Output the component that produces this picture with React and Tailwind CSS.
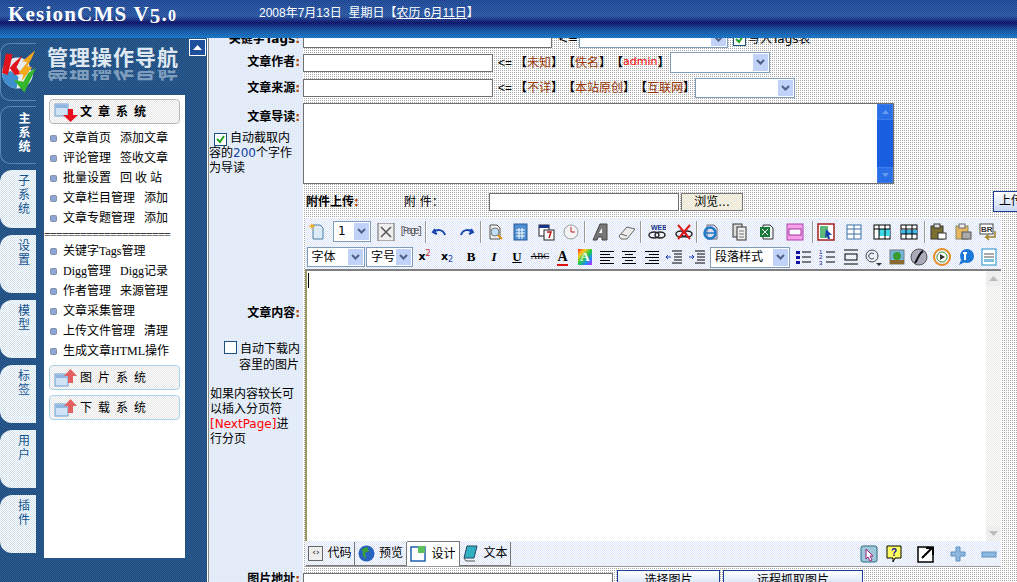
import { Fragment } from 'react';

const cjk = "font-['DejaVu_Sans','Noto_Sans_CJK_SC',sans-serif]";

// Sidebar tabs
const tabs = [
  { label: ['子', '系', '统'] },
  { label: ['设', '置'] },
  { label: ['模', '型'] },
  { label: ['标', '签'] },
  { label: ['用', '户'] },
  { label: ['插', '件'] },
];

const menuTop = [
  ['文章首页', '添加文章'],
  ['评论管理', '签收文章'],
  ['批量设置', '回 收 站'],
  ['文章栏目管理', '添加'],
  ['文章专题管理', '添加'],
];

const menuBottom = [
  ['关键字Tags管理'],
  ['Digg管理', 'Digg记录'],
  ['作者管理', '来源管理'],
  ['文章采集管理'],
  ['上传文件管理', '清理'],
  ['生成文章HTML操作'],
];

function Arrow({ down }) {
  return (
    <svg width="30" height="20" viewBox="0 0 30 20" className="shrink-0">
      <rect x="2" y={down ? 2 : 6} width="13" height="12" fill="#cfe2f6" stroke="#6f9fd0" />
      <rect x="3" y={down ? 3 : 7} width="11" height="3" fill="#8fb6e0" />
      {down ? (
        <path d="M15 7h5v6h5l-7.500 7-7.500-7h5z" fill="#e8101c" />
      ) : (
        <path d="M15 15h5v-7h4l-6.500-7-6.500 7h4z" fill="#e2605f" />
      )}
    </svg>
  );
}

function MenuHead({ label, open }) {
  return (
    <div
      className={`mx-[5px] flex h-[25px] w-[131px] items-center rounded-[4px] border pl-[3px] bg-[repeating-conic-gradient(#e4e4e4_0_25%,#fff_0_50%)] bg-[size:2px_2px] ${
        open ? 'border-[#b8b8b8] font-bold' : 'border-[#a9d2ec]'
      }`}
    >
      <Arrow down={open} />
      <span className="ml-[-3px] text-[12px] leading-none tracking-[1.500px] whitespace-pre text-black">{label}</span>
    </div>
  );
}

function MenuRow({ item }) {
  return (
    <div className="flex h-[20px] items-center gap-[9px] pl-[7px] text-[12px] whitespace-nowrap text-black">
      <span className="mr-[-2px] size-[5px] shrink-0 rounded-[1px] bg-[#8ea6d8] shadow-[0_0_0_1px_#7f8fa8]" />
      <span className="min-w-[48px]">{item[0]}</span>
      {item[1] && <span>{item[1]}</span>}
    </div>
  );
}

function Sidebar() {
  return (
    <aside className="flex w-[207px] shrink-0 bg-[repeating-conic-gradient(#1c4a80_0_25%,#2f5f8e_0_50%)] bg-[size:2px_2px] font-['Liberation_Serif','Noto_Sans_CJK_SC',serif]">
      <div className="flex w-[36px] shrink-0 flex-col">
        <div className="mt-[5px] flex h-[58px] items-center rounded-l-[10px] border-y border-l border-[#5b86b4]">
          <svg width="36" height="44" viewBox="0 0 36 44">
            <circle cx="17" cy="23" r="16" fill="#e4ecef" />
            <path d="M1 24a16 16 0 0 0 15 15l2-12-8-6z" fill="#3f8fd0" />
            <path d="M20 6a17 17 0 0 1 13 13l-2 2-4-13z" fill="#245a8c" />
            <path d="M13 30l11 13 12-25-8 5-5 9z" fill="#35b52c" />
            <path d="M5 3l7 1-5 21-6-2z" fill="#e0141c" />
            <path d="M13 13l9-8-6 12 5 7-7 1-5-7z" fill="#e0141c" />
            <path d="M35 0L22 11l5 1-9 11 5 2-2 7 11-15-5-1 5-9z" fill="#f4a81c" />
          </svg>
        </div>
        <div className="mt-[5px] flex h-[58px] flex-col items-center rounded-l-[10px] border-y border-l border-[#5b86b4] pt-[5px] pl-[12px] text-[12px] leading-[14px] font-bold text-white">
          <span>主</span>
          <span>系</span>
          <span>统</span>
        </div>
        <div className="mt-[6px] flex flex-col gap-[7px]">
          {tabs.map((t) => (
            <div
              key={t.label[0]}
              className="flex h-[58px] flex-col items-center rounded-l-[12px] bg-[repeating-conic-gradient(#cfe0ee_0_25%,#fff_0_50%)] bg-[size:2px_2px] pt-[4px] pl-[12px] text-[12px] leading-[14px] text-[#14558f]"
            >
              {t.label.map((c) => (
                <span key={c}>{c}</span>
              ))}
            </div>
          ))}
        </div>
      </div>
      <div className="ml-[8px] flex w-[141px] shrink-0 flex-col">
        <div className="h-[57px]">
          <div className="pt-[8px] pl-[3px] text-[21px] leading-[24px] font-bold tracking-[1px] whitespace-nowrap text-[#dfe8f0]">
            管理操作导航
          </div>
          <div className="h-[11px] overflow-hidden pl-[3px] text-[21px] leading-[22px] font-bold tracking-[1px] whitespace-nowrap text-[#7f9dbd] -scale-y-100">
            管理操作导航
          </div>
        </div>
        <div className="flex h-[463px] flex-col bg-white pt-[4px]">
          <MenuHead label="文 章 系 统" open />
          <div className="mt-[4px]">
            {menuTop.map((m) => (
              <MenuRow key={m[0]} item={m} />
            ))}
          </div>
          <div className="h-[14px] overflow-hidden text-[12px] leading-[14px] tracking-[-0.770px] text-black">
            =====================
          </div>
          <div className="mt-[-1px]">
            {menuBottom.map((m) => (
              <MenuRow key={m[0]} item={m} />
            ))}
          </div>
          <div className="mt-[4px] flex flex-col gap-[5px]">
            <MenuHead label="图 片 系 统" />
            <MenuHead label="下 载 系 统" />
          </div>
        </div>
      </div>
      <div className="mt-[1px] ml-[4px] flex size-[17px] items-center justify-center border border-white bg-[#1d4f9c]">
        <svg width="9" height="5" viewBox="0 0 9 5">
          <path d="M0 5l4.500-5 4.500 5z" fill="#fff" />
        </svg>
      </div>
    </aside>
  );
}

// Native-looking select with the pale blue chevron
function Select({ w, h, label, className = '' }) {
  return (
    <div className={`flex shrink-0 items-stretch border border-[#7f9db9] bg-white ${w} ${h} ${className}`}>
      <span className="flex-1 pl-[4px] text-[12px] leading-[19px] whitespace-nowrap text-black">{label}</span>
      <span className="my-px mr-px flex w-[15px] items-center justify-center bg-[#c1d2f8]">
        <svg width="9" height="7" viewBox="0 0 9 7">
          <path d="M1 1l3.500 3.500L8 1" fill="none" stroke="#4d6185" strokeWidth="2" />
        </svg>
      </span>
    </div>
  );
}

function Input({ className = '' }) {
  return <div className={`shrink-0 border border-[#707070] bg-white ${className}`} />;
}

function Label({ children, className = '' }) {
  return (
    <div className={`w-[92px] shrink-0 pr-[1px] text-right text-[12px] font-bold text-black ${className}`}>
      {children}
      <span className="text-[#b04000]">:</span>
    </div>
  );
}

function Quick({ items }) {
  return (
    <span className="flex items-center text-[12px] whitespace-nowrap text-black">
      <span className="w-[17px] font-['Liberation_Sans']">&lt;=</span>
      {items.map((t) => (
        <Fragment key={t}>
          <span className="w-[12px] font-bold">【</span>
          <span className={t === 'admin' ? 'text-[11px] text-[#ff0000]' : 'text-[#993300]'}>{t}</span>
          <span className="w-[12px] font-bold">】</span>
        </Fragment>
      ))}
    </span>
  );
}

const Svg = ({ children, w = 18 }) => (
  <svg width={w} height="18" viewBox={`0 0 ${w} 18`}>
    {children}
  </svg>
);

const Doc = ({ fill = '#fff', stroke = '#555' }) => <path d="M5 2h7l3 3v11H5z" fill={fill} stroke={stroke} />;

// Toolbar row 1, [width of slot, drawing]; no drawing means a separator
const toolbarOne = [
  [22, <Svg key="new"><Doc fill="#dcebf6" stroke="#4a7fa8" /><path d="M4 0l1 2 3 1-3 1-1 3-1-3-3-1 3-1z" fill="#f4b020" /></Svg>],
  [48, <Select key="sel" w="w-[38px]" h="h-[21px]" label="1" />],
  [20, <Svg key="x"><rect x="1" y="0" width="16" height="18" fill="#eee" stroke="#666" /><path d="M4 4l10 10M14 4L4 14" stroke="#555" strokeWidth="1.500" /></Svg>],
  [28, <span key="pg" className="font-['Liberation_Mono'] text-[10px] tracking-[-2.500px] text-[#555]">[Page]</span>],
  [4, null],
  [24, <Svg key="undo"><path d="M4 6l-2 3 4 2M3 9c3-3 9-3 11 3" fill="none" stroke="#1746b0" strokeWidth="2" /></Svg>],
  [28, <Svg key="redo"><path d="M14 6l2 3-4 2M15 9c-3-3-9-3-11 3" fill="none" stroke="#1746b0" strokeWidth="2" /></Svg>],
  [2, null],
  [24, <Svg key="find"><Doc fill="#eee" /><circle cx="10" cy="9" r="4" fill="#bfe0f8" stroke="#777" /><path d="M13 12l4 4" stroke="#e09010" strokeWidth="2" /></Svg>],
  [28, <Svg key="calc"><rect x="3" y="1" width="13" height="16" fill="#4d8ed0" stroke="#2a5a98" /><path d="M5 7h9M5 10h9M5 13h9M8 5v11M11 5v11" stroke="#fff" /></Svg>],
  [24, <Svg key="cal"><rect x="2" y="2" width="10" height="11" fill="#fff" stroke="#222" /><rect x="2" y="2" width="10" height="3" fill="#16348a" /><rect x="7" y="7" width="10" height="10" fill="#fff" stroke="#222" /><path d="M10 9h4l-2 6" fill="none" stroke="#c01818" strokeWidth="1.500" /></Svg>],
  [26, <Svg key="clock"><circle cx="9" cy="9" r="7" fill="#f4f4f4" stroke="#999" /><path d="M9 4v5h4" fill="none" stroke="#c02020" /></Svg>],
  [2, null],
  [28, <Svg key="a"><path d="M2 17L9 1h7v16h-5v-3H7l-1 3z" fill="#777" stroke="#444" /><path d="M8 10h3V5z" fill="#fff" /></Svg>],
  [26, <Svg key="erase"><path d="M1 13l8-9 8 2-8 10-6 0z" fill="#ececec" stroke="#666" /><path d="M3 11l6 2" stroke="#666" /></Svg>],
  [2, null],
  [30, <Svg key="web"><text x="3" y="7" fontSize="7" fontWeight="700" fill="#16348a" fontFamily="Liberation Sans">WEB</text><ellipse cx="6" cy="12" rx="5" ry="3" fill="none" stroke="#222" strokeWidth="1.500" /><ellipse cx="12" cy="12" rx="5" ry="3" fill="none" stroke="#222" strokeWidth="1.500" /></Svg>],
  [24, <Svg key="noweb"><ellipse cx="6" cy="11" rx="5" ry="3" fill="none" stroke="#222" strokeWidth="1.500" /><ellipse cx="12" cy="11" rx="5" ry="3" fill="none" stroke="#222" strokeWidth="1.500" /><path d="M3 2l12 14M15 2L3 16" stroke="#e01818" strokeWidth="2" /></Svg>],
  [2, null],
  [26, <Svg key="ie"><Doc fill="#dde" stroke="#667" /><circle cx="8" cy="10" r="5.500" fill="none" stroke="#1c7ac8" strokeWidth="2.500" /><path d="M3 10h10" stroke="#1c7ac8" strokeWidth="1.500" /></Svg>],
  [32, <Svg key="copy"><rect x="2" y="1" width="9" height="13" fill="#ddd" stroke="#333" /><rect x="6" y="4" width="9" height="13" fill="#eee" stroke="#333" /><path d="M8 8h5M8 11h5M8 14h5" stroke="#777" /></Svg>],
  [22, <Svg key="xls"><Doc fill="#f4f4f4" stroke="#333" /><rect x="2" y="4" width="10" height="10" fill="#1a7a3a" /><path d="M4 6l6 6M10 6l-6 6" stroke="#fff" /></Svg>],
  [34, <Svg key="pink"><rect x="1" y="1" width="16" height="16" fill="#f6a0e8" stroke="#b040b0" /><rect x="3" y="6" width="12" height="6" fill="#fff" stroke="#a030a0" /></Svg>],
  [2, null],
  [24, <Svg key="sel2"><rect x="1" y="1" width="16" height="16" fill="#fff" stroke="#a02020" strokeWidth="1.500" /><rect x="3" y="3" width="8" height="12" fill="#60b878" /><path d="M9 6l6 6-3 0 1 4-2 0-1-3-2 2z" fill="#1840b0" /></Svg>],
  [32, <Svg key="t1"><rect x="2" y="2" width="14" height="14" fill="#fff" stroke="#3a6ea5" /><path d="M2 6h14M2 11h14M9 2v14" stroke="#3a6ea5" /></Svg>],
  [24, <Svg key="t2"><rect x="1" y="2" width="16" height="14" fill="#fff" stroke="#000" /><rect x="6" y="6" width="11" height="7" fill="#40d8e8" /><path d="M1 6h16M6 2v14M12 2v14" stroke="#000" /></Svg>],
  [30, <Svg key="t3"><rect x="1" y="2" width="16" height="14" fill="#fff" stroke="#000" /><rect x="1" y="7" width="16" height="4" fill="#40b8e8" /><path d="M1 6h16M1 11h16M6 2v14M12 2v14" stroke="#000" /></Svg>],
  [2, null],
  [24, <Svg key="clip"><rect x="2" y="3" width="12" height="13" fill="#7c7030" stroke="#333" /><rect x="5" y="1" width="6" height="4" fill="#ddd" stroke="#333" /><rect x="9" y="10" width="8" height="6" fill="#fff" stroke="#333" /></Svg>],
  [26, <Svg key="paste"><rect x="2" y="3" width="12" height="13" fill="#e8b860" stroke="#886" /><rect x="5" y="1" width="6" height="4" fill="#eee" stroke="#666" /><rect x="8" y="9" width="9" height="7" fill="#aaa" stroke="#555" /></Svg>],
  [24, <Svg key="br"><rect x="1" y="1" width="13" height="10" fill="#fff" stroke="#444" /><text x="2" y="9" fontSize="8" fontWeight="700" fill="#333" fontFamily="Liberation Sans">BR</text><path d="M16 8v6H7l3-3M7 14l3 3" fill="none" stroke="#a08020" strokeWidth="1.500" /></Svg>],
];

const Lines = ({ rows }) => (
  <Svg>
    {rows.map(([x1, x2], i) => (
      <path key={i} d={`M${x1} ${3 + i * 3}.5H${x2}`} stroke="#000" />
    ))}
  </Svg>
);

const al = [[2, 16], [2, 12], [2, 16], [2, 12], [2, 16]];
const ac = [[2, 16], [5, 13], [2, 16], [5, 13], [2, 16]];
const ar = [[2, 16], [6, 16], [2, 16], [6, 16], [2, 16]];

// Toolbar row 2
const toolbarTwo = [
  [59, <Select key="font" w="w-[58px]" h="h-[20px]" label="字体" />],
  [49, <Select key="size" w="w-[47px]" h="h-[20px]" label="字号" />],
  [21, <span key="sup" className="text-[11px] font-bold text-black">x<sup className="text-[8px] font-normal text-[#c02020]">2</sup></span>],
  [24, <span key="sub" className="text-[11px] font-bold text-black">x<sub className="text-[8px] font-normal text-[#1840b0]">2</sub></span>],
  [24, <span key="b" className="font-['Liberation_Serif'] text-[13px] font-bold text-black">B</span>],
  [22, <span key="i" className="font-['Liberation_Serif'] text-[13px] font-bold text-black italic">I</span>],
  [24, <span key="u" className="font-['Liberation_Serif'] text-[13px] font-bold text-black underline">U</span>],
  [22, <span key="abc" className="font-['Liberation_Serif'] text-[9px] text-black line-through">ABC</span>],
  [23, <span key="ca" className="border-b-2 border-[#e01010] font-['Liberation_Serif'] text-[14px] leading-[15px] font-bold text-black">A</span>],
  [22, <span key="ra" className="bg-[linear-gradient(135deg,#f22,#fc2,#2c4,#28f,#c2f)] px-[2px] font-['Liberation_Serif'] text-[13px] leading-[16px] font-bold text-white">A</span>],
  [21, <Lines key="l" rows={al} />],
  [24, <Lines key="c" rows={ac} />],
  [21, <Lines key="r" rows={ar} />],
  [23, <Svg key="out"><path d="M7 3h10M9 6h8M9 9h8M9 12h8M7 15h10" stroke="#000" /><path d="M6 9H1M3 7L1 9l2 2" fill="none" stroke="#1840b0" /></Svg>],
  [24, <Svg key="ind"><path d="M7 3h10M9 6h8M9 9h8M9 12h8M7 15h10" stroke="#000" /><path d="M1 9h5M4 7l2 2-2 2" fill="none" stroke="#1840b0" /></Svg>],
  [82, <Select key="para" w="w-[80px]" h="h-[21px]" label="段落样式" />],
  [23, <Svg key="ul"><path d="M2 3h4v3H2zM2 8h4v3H2zM2 13h4v3H2z" fill="#1010a0" /><path d="M8 4h9M8 9h9M8 14h9" stroke="#000" /></Svg>],
  [25, <Svg key="ol"><text x="1" y="6" fontSize="6" fill="#1010a0" fontFamily="Liberation Sans">1</text><text x="1" y="11" fontSize="6" fill="#1010a0" fontFamily="Liberation Sans">2</text><text x="1" y="17" fontSize="6" fill="#1010a0" fontFamily="Liberation Sans">3</text><path d="M8 4h9M8 9h9M8 14h9" stroke="#000" /></Svg>],
  [23, <Svg key="box"><path d="M2 2h14M2 16h14" stroke="#000" /><rect x="3" y="6" width="12" height="6" fill="none" stroke="#000" /></Svg>],
  [23, <Svg key="copyr"><circle cx="7" cy="8" r="6" fill="none" stroke="#444" /><path d="M9 6a3 3 0 1 0 0 4" fill="none" stroke="#444" /><path d="M11 15h6l-3 3z" fill="#333" /></Svg>],
  [23, <Svg key="img"><rect x="2" y="2" width="14" height="14" fill="#6fb8e0" stroke="#777" /><circle cx="9" cy="8" r="4" fill="#3a9a30" /><rect x="2" y="12" width="14" height="4" fill="#8a6a30" /></Svg>],
  [22, <Svg key="swf"><circle cx="9" cy="9" r="8" fill="#aab" stroke="#555" /><path d="M13 3C9 5 8 11 5 15" stroke="#111" strokeWidth="2" fill="none" /></Svg>],
  [24, <Svg key="media"><circle cx="9" cy="9" r="8" fill="none" stroke="#e88820" strokeWidth="2" /><circle cx="9" cy="9" r="5" fill="#fff" stroke="#3a9a30" /><path d="M7 6l5 3-5 3z" fill="#333" /></Svg>],
  [23, <Svg key="real"><circle cx="10" cy="8" r="7" fill="#1c78d8" /><path d="M6 5h4M8 5v7" stroke="#fff" strokeWidth="2" /><path d="M4 12l-2 5 6-3z" fill="#1c78d8" /></Svg>],
  [23, <Svg key="form"><rect x="2" y="1" width="14" height="16" fill="#fff" stroke="#2090c8" /><path d="M4 6h10M4 9h10" stroke="#555" /><rect x="4" y="11" width="10" height="3" fill="#80c0e0" /></Svg>],
];

function Toolbar({ items, className = '' }) {
  return (
    <div className={`flex items-center ${className}`}>
      {items.map(([w, el], i) =>
        el ? (
          <div key={i} className="flex shrink-0 items-center justify-center" style={{ width: w }}>
            {el}
          </div>
        ) : (
          <div key={i} className="flex h-[22px] shrink-0 justify-center" style={{ width: w }}>
            <span className="w-[2px] shrink-0 border-l border-[#999] bg-white" />
          </div>
        ),
      )}
    </div>
  );
}

function ModeTab({ label, active, w, children }) {
  return (
    <div
      className={`flex items-center justify-center gap-[4px] border-r border-[#777] text-[12px] text-black ${w} ${
        active ? 'mt-[-1px] h-[25px] border-t border-[#777] bg-white' : 'h-[24px] border-b'
      }`}
    >
      {children}
      {label}
    </div>
  );
}

export default function App() {
  return (
    <div className={`flex h-screen w-[1017px] flex-col overflow-hidden ${cjk}`}>
      <header className="flex h-[38px] shrink-0 items-start bg-[image:repeating-conic-gradient(#ffffff22_0_25%,transparent_0_50%),linear-gradient(180deg,#143f90_0%,#1f4f9c_42%,#000860_60%,#0a4698_78%,#0a70c4_100%)] bg-[size:2px_2px,100%_100%]">
        <div className="w-[259px] shrink-0 pl-[8px] font-['Liberation_Serif'] text-[21px] leading-[29px] font-bold tracking-[1.200px] whitespace-nowrap text-white">
          KesionCMS V<span className="relative top-[2px]">5</span>.<span className="text-[16px]">0</span>
        </div>
        <div className="pt-[5px] font-['Liberation_Sans','Noto_Sans_CJK_SC',sans-serif] text-[12px] leading-[16px] whitespace-pre text-white">
          2008年7月13日  星期日【<span className="underline">农历 6月11日</span>】
        </div>
      </header>
      <div className="flex min-h-0 flex-1">
        <Sidebar />
        <main className="ml-[1px] min-w-0 flex-1 overflow-hidden border-l border-[#8a8a8a] bg-[image:linear-gradient(90deg,#e2ecf9e8_94px,transparent_94px),conic-gradient(#a8a8a8_0_25%,#fff_0)] bg-[size:100%_100%,2px_2px]">
          {/* top row is scrolled behind the header */}
          <div className="-mt-[8px] flex h-[18px] items-center text-[12px]">
            <Label>关键字Tags</Label>
            <Input className="ml-[2px] h-[18px] w-[249px]" />
            <span className="ml-[6px] w-[21px]">&lt;=</span>
            <Select w="w-[149px]" h="h-[18px]" />
            <span className="ml-[5px] inline-flex size-[13px] items-center justify-center border border-[#1c5180] bg-white">
              <svg width="9" height="9" viewBox="0 0 9 9"><path d="M1 4l3 3 4-6" fill="none" stroke="#21a121" strokeWidth="2" /></svg>
            </span>
            <span className="ml-[2px]">写入Tags表</span>
          </div>
          <div className="mt-[4px] flex h-[21px] items-center">
            <Label className="mb-[2px]">文章作者</Label>
            <Input className="mt-[1px] ml-[2px] h-[18px] w-[190px]" />
            <span className="ml-[5px] w-[172px]"><Quick items={['未知', '佚名', 'admin']} /></span>
            <Select w="w-[100px]" h="h-[21px]" />
          </div>
          <div className="mt-[5px] flex h-[20px] items-center">
            <Label className="mb-[1px]">文章来源</Label>
            <Input className="ml-[2px] h-[18px] w-[190px]" />
            <span className="ml-[5px] w-[197px]"><Quick items={['不详', '本站原创', '互联网']} /></span>
            <Select w="w-[100px]" h="h-[20px]" />
          </div>
          <div className="mt-[5px] flex">
            <div className="w-[92px] shrink-0">
              <Label className="pt-[5px]">文章导读</Label>
              <div className="mt-[5px] text-[12px] leading-[15px] text-black">
                <div className="pl-[5px] whitespace-nowrap">
                  <span className="mr-[3px] inline-flex size-[13px] translate-y-[2px] items-center justify-center border border-[#1c5180] bg-white">
                    <svg width="9" height="9" viewBox="0 0 9 9"><path d="M1 4l3 3 4-6" fill="none" stroke="#21a121" strokeWidth="2" /></svg>
                  </span>
                  自动截取内
                </div>
                <div>容的<span className="text-[#1040a0]">200</span>个字作</div>
                <div>为导读</div>
              </div>
            </div>
            <div className="ml-[2px] flex h-[81px] w-[591px] shrink-0 justify-end border border-[#707070] bg-white">
              <div className="flex w-[16px] flex-col justify-between bg-[#1a5ee0]">
                <div className="flex h-[16px] items-center justify-center border border-[#3f7de8] bg-[#2a6ee8]">
                  <svg width="7" height="4" viewBox="0 0 7 4"><path d="M0 4l3.500-4 3.500 4z" fill="#6a9cf0" /></svg>
                </div>
                <div className="flex h-[16px] items-center justify-center border border-[#3f7de8] bg-[#2a6ee8]">
                  <svg width="7" height="4" viewBox="0 0 7 4"><path d="M0 0l3.500 4 3.500-4z" fill="#6a9cf0" /></svg>
                </div>
              </div>
            </div>
          </div>
          <div className="mt-[7px] flex h-[21px] items-center text-[12px] text-black">
            <span className="ml-[97px] w-[98px] shrink-0 font-bold whitespace-nowrap">附件上传<span className="text-[#b04000]">:</span></span>
            <span className="w-[85px] shrink-0 whitespace-nowrap">附 件：</span>
            <Input className="h-[18px] w-[190px]" />
            <div className="ml-[2px] flex h-[18px] w-[62px] shrink-0 items-center justify-center border border-[#777] bg-[repeating-conic-gradient(#e8e4d0_0_25%,#f8f6ea_0_50%)] bg-[size:2px_2px]">浏览...</div>
            <div className="ml-[250px] h-[21px] w-[40px] shrink-0 border border-[#1c3f94] bg-[linear-gradient(180deg,#fff,#c8d8f4)] pl-[5px] leading-[19px] whitespace-nowrap">上传</div>
          </div>
          <div className="mt-[6px] flex">
            <div className="w-[96px] shrink-0 text-[12px] leading-[15px] text-black">
              <div className="mt-[88px] pr-[5px] text-right font-bold">文章内容<span className="text-[#b04000]">:</span></div>
              <div className="mt-[20px] flex items-start pl-[15px]">
                <span className="mr-[3px] size-[13px] shrink-0 border border-[#1c5180] bg-white" />
                <span className="mt-[1px] whitespace-nowrap">自动下载内</span>
              </div>
              <div className="mt-[1px] pl-[30px] whitespace-nowrap">容里的图片</div>
              <div className="mt-[14px] pl-[1px]">
                <div className="whitespace-nowrap">如果内容较长可</div>
                <div className="whitespace-nowrap">以插入分页符</div>
                <div className="whitespace-nowrap"><span className="text-[#ff0000]">[NextPage]</span>进</div>
                <div className="whitespace-nowrap">行分页</div>
              </div>
            </div>
            <div className="w-[696px] shrink-0 bg-[repeating-conic-gradient(#d8e2f8_0_25%,#fff_0_50%)] bg-[size:2px_2px] text-black">
              <Toolbar items={toolbarOne} className="h-[27px] pl-[1px]" />
              <Toolbar items={toolbarTwo} className="h-[24px] pl-[1px]" />
              <div className="flex h-[272px] border-t-2 border-l-2 border-t-[#808080] border-l-[#9a9a60] bg-white">
                <span className="mt-[2px] ml-[1px] h-[15px] w-px bg-black" />
                <div className="ml-auto flex w-[15px] flex-col justify-between bg-[repeating-conic-gradient(#e8e8e0_0_25%,#fff_0_50%)] bg-[size:2px_2px]">
                  <div className="flex h-[15px] items-center justify-center bg-[#eeeeee]">
                    <svg width="9" height="5" viewBox="0 0 9 5"><path d="M0 5l4.500-5 4.500 5z" fill="#bbb" /></svg>
                  </div>
                  <div className="flex h-[15px] items-center justify-center bg-[#eeeeee]">
                    <svg width="9" height="5" viewBox="0 0 9 5"><path d="M0 0l4.500 5 4.500-5z" fill="#bbb" /></svg>
                  </div>
                </div>
              </div>
              <div className="flex h-[26px] items-center justify-between border-b border-[#999] pr-[4px] pl-[1px]">
                <div className="flex items-center">
                  <ModeTab label="代码" w="w-[49px]">
                    <span className="flex size-[15px] items-center justify-center border border-[#666] bg-[#eee] text-[9px] font-bold text-[#555]">‹›</span>
                  </ModeTab>
                  <ModeTab label="预览" w="w-[52px]">
                    <svg width="17" height="17" viewBox="0 0 17 17"><circle cx="8.500" cy="8.500" r="8" fill="#2a62c0" /><path d="M4 4l5-2 2 4-4 2 1 6-3-3z" fill="#3aa03a" /></svg>
                  </ModeTab>
                  <ModeTab label="设计" w="w-[53px]" active>
                    <svg width="17" height="17" viewBox="0 0 17 17"><rect x="1" y="2" width="14" height="14" fill="#fff" stroke="#1c60b0" strokeWidth="1.500" /><rect x="8" y="1" width="7" height="7" fill="#5cc05c" /></svg>
                  </ModeTab>
                  <ModeTab label="文本" w="w-[51px]">
                    <svg width="17" height="17" viewBox="0 0 17 17"><path d="M5 1h10l-3 12H2z" fill="#30b0c0" stroke="#246" /><path d="M2 13l2 3h9" fill="none" stroke="#555" /></svg>
                  </ModeTab>
                </div>
                <div className="flex items-center gap-[15px]">
                  <svg width="18" height="18" viewBox="0 0 18 18" className="mr-[-7px]"><rect x="1" y="1" width="16" height="16" rx="2" fill="#9ec8d8" stroke="#2a6a88" /><path d="M6 4l7 7-3 0 2 4-2 1-2-4-2 2z" fill="#fff" stroke="#a02080" /></svg>
                  <svg width="16" height="18" viewBox="0 0 16 18"><path d="M1 1h14v12H9l-2 4v-4H1z" fill="#ffff60" stroke="#000" /><text x="5" y="11" fontSize="10" fontWeight="700" fill="#1010a0" fontFamily="Liberation Sans">?</text></svg>
                  <svg width="18" height="18" viewBox="0 0 18 18"><rect x="1" y="2" width="15" height="15" fill="#fff" stroke="#000" strokeWidth="1.500" /><path d="M5 13L15 3M9 3h7v7" fill="none" stroke="#000" strokeWidth="2" /></svg>
                  <svg width="16" height="16" viewBox="0 0 16 16"><path d="M6 1h4v5h5v4h-5v5H6v-5H1V6h5z" fill="#8cb8e0" stroke="#6090c0" /></svg>
                  <svg width="16" height="16" viewBox="0 0 16 16"><rect x="1" y="6" width="14" height="5" fill="#8cb8e0" stroke="#6090c0" /></svg>
                </div>
              </div>
            </div>
          </div>
          <div className="mt-[3px] flex h-[20px] items-start text-[12px] text-black">
            <Label>图片地址</Label>
            <Input className="mt-[3px] ml-[2px] h-[18px] w-[310px]" />
            <div className="ml-[4px] h-[20px] w-[103px] shrink-0 border border-[#1c3f94] bg-[linear-gradient(180deg,#fff,#c8d8f4)] text-center leading-[18px]">选择图片</div>
            <div className="ml-[3px] h-[20px] w-[140px] shrink-0 border border-[#1c3f94] bg-[linear-gradient(180deg,#fff,#c8d8f4)] text-center leading-[18px]">远程抓取图片</div>
          </div>
        </main>
      </div>
    </div>
  );
}
